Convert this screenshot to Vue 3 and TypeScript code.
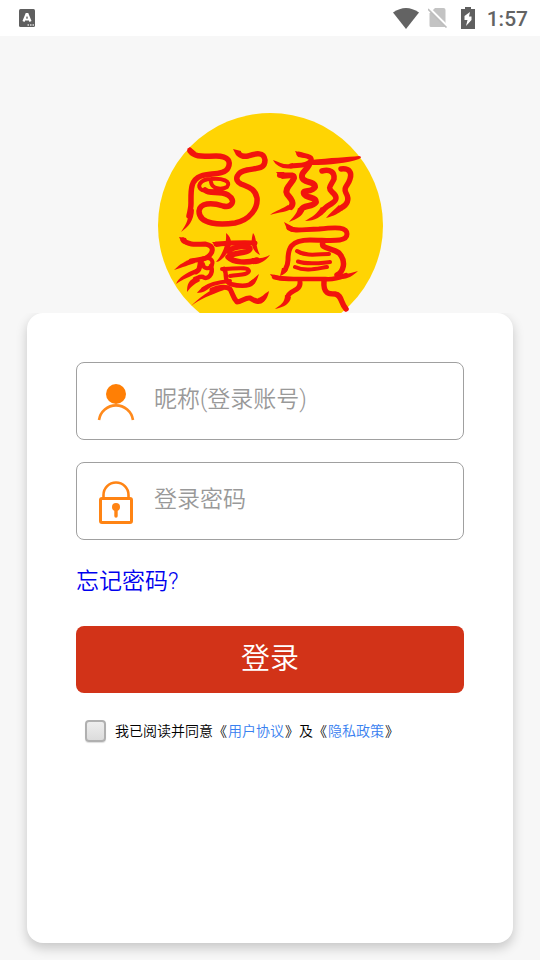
<script setup lang="ts">
import { ref } from 'vue'

const account = ref('')
const password = ref('')
const agreed = ref(false)

// Brush strokes of the seal: path and stroke thickness
const strokes: { d: string; w: number }[] = [
  { d: 'M190 151C195 158 204 156 216 156C229 156 231 162 228 168C225 175 210 173 201 176C190 180 191 191 191 203C191 208 190 212 189 216', w: 5.5 },
  { d: 'M211 182C212 189 221 190 227 187C232 181 222 178 211 179C200 179 196 187 202 190C210 192 220 191 227 187', w: 4 },
  { d: 'M205 190C210 195 219 190 228 195C237 201 231 208 223 206C211 202 200 203 199 211C199 225 221 225 235 223C250 220 258 208 257 198C255 188 248 187 241 184C233 180 237 172 247 170C258 168 265 169 265 160C264 152 256 153 248 156C243 157 241 156 239 154', w: 5.5 },
  { d: 'M299 154C304 156 313 156 311 161C307 166 300 165 291 166', w: 5 },
  { d: 'M280 175C285 177 294 173 294 178C292 184 284 188 287 194C290 198 295 202 291 207', w: 6 },
  { d: 'M309 165C306 171 301 172 302 177C303 184 315 180 315 187C312 193 302 189 304 194C307 199 316 196 316 202C312 208 304 204 301 210', w: 6 },
  { d: 'M322 171C330 169 335 172 334 179C331 186 327 187 332 192C337 196 338 200 331 204C327 206 325 208 323 210', w: 5.5 },
  { d: 'M341 169C350 168 352 173 350 179C348 186 343 187 346 193C350 200 347 205 341 208', w: 5.5 },
  { d: 'M183 240C189 246 198 244 205 244C216 246 213 254 206 258C200 260 195 260 191 261', w: 5 },
  { d: 'M204 259C209 256 214 260 212 265C210 270 203 269 203 264', w: 4 },
  { d: 'M203 259C197 262 203 269 196 272', w: 5 },
  { d: 'M211 266C214 275 207 280 203 277C200 276 198 278 195 279', w: 4.5 },
  { d: 'M216 244C229 243 241 242 255 243', w: 5 },
  { d: 'M228 251C235 246 250 245 250 249C248 254 232 252 228 257C234 263 247 263 257 260', w: 5.5 },
  { d: 'M222 269C234 269 248 266 249 271C247 276 237 274 230 276', w: 4 },
  { d: 'M224 269C228 274 223 280 230 284C238 286 249 287 253 282', w: 4.5 },
  { d: 'M230 281C219 282 208 285 203 289', w: 4 },
  { d: 'M212 290C218 287 226 286 230 289C233 294 233 298 237 302C241 302 246 297 250 298C255 301 259 303 262 300', w: 5 },
  { d: 'M289 228C294 232 305 229 319 229C337 227 347 227 347 234C347 243 329 240 310 240C290 240 288 249 288 260C288 265 286 268 285 270', w: 5 },
  { d: 'M323 242C320 249 331 247 339 253C347 262 343 272 337 275', w: 5.5 },
  { d: 'M297 251C306 257 319 254 329 254M298 261.500C308 265 320 263 330 262M295 267C306 272 319 268 327 267', w: 4 },
  { d: 'M274 277C283 280 301 279 325 279C335 280 341 277 346 275', w: 4.500 },
  { d: 'M300 282C301 291 290 290 288 296', w: 5 },
  { d: 'M324 281C323 294 329 294 335 294C342 295 340 302 346 309', w: 5.500 },
]

// Tapered ends of the same strokes, drawn as filled shapes
const tapers: string[] = [
  'M188 213C189 220 185 226 181 232C188 227 194 221 194 209Z',
  'M195 155L187 149L190 147L196 152Z',
  'M233 149L241 151L241 157L236 155Z',
  'M311 160C330 158 348 157 359 156Q363 157 359 159C347 163 330 165 311 165Z',
  'M293 163C286 166 281 163 273 160C276 166 283 170 293 168Z',
  'M276 172L284 172L287 178L282 179Z',
  'M295 151L303 153L305 158L298 157Z',
  'M288 205C283 209 276 210 270 215C279 212 288 212 293 208Z',
  'M298 208C297 214 292 218 289 222C297 219 302 216 304 211Z',
  'M321 207C317 214 312 217 305 221C315 221 322 216 326 211Z',
  'M339 205C334 210 330 213 326 218C334 216 339 213 343 210Z',
  'M179 237L186 238L188 245L182 243Z',
  'M194 258C185 261 180 264 174 270C183 267 189 265 195 263Z',
  'M196 269C186 273 179 277 176 284C183 279 190 277 199 272Z',
  'M198 277C188 279 187 285 187 292C191 287 194 284 200 281Z',
  'M226 233C232 237 233 246 227 253C224 258 219 262 216 262C222 255 227 245 226 233Z',
  'M212 242L218 242L221 246L216 247Z',
  'M253 233C257 238 255 245 260 255C252 251 250 244 253 233Z',
  'M252 258C261 259 266 257 270 255C265 261 260 265 251 264Z',
  'M259 274C257 280 256 284 250 286L249 282C253 280 255 277 259 274Z',
  'M222 286C210 289 199 298 191 306C200 299 210 295 224 290Z',
  'M208 285C203 286 199 290 197 293C203 293 207 290 211 287Z',
  'M259 302C264 304 268 298 269 291C264 294 261 298 258 298Z',
  'M284 222L295 228L292 232L287 229Z',
  'M282 268L288 268C287 273 283 275 280 276Z',
  'M270 274C277 275 282 277 287 277L285 281C277 281 272 278 270 274Z',
  'M343 274C349 274 353 272 358 271C353 276 347 279 342 279Z',
  'M285 295C285 303 280 305 275 309C284 307 290 304 291 297Z',
]
</script>

<template>
  <div class="page">
    <header class="status">
      <svg class="status-app" viewBox="0 0 16 18" aria-hidden="true">
        <rect width="16" height="18" rx="1.5" fill="#5f5f5f" />
        <path d="M4.500 12.500L7.500 5H8.500L11.500 12.500M5.800 10.500H10.200" fill="none" stroke="#fff" stroke-width="2.200" />
        <path d="M8.500 16h1.500M11 16h1.500M13.500 16h1.500" stroke="#ddd" stroke-width="1.500" />
      </svg>
      <div class="status-right">
        <svg class="wifi" viewBox="0 0 26 21" aria-hidden="true">
          <path d="M0 4.500Q13 -4.500 26 4.500L13 21Z" fill="#636363" />
        </svg>
        <svg class="sim" viewBox="0 0 20 20" aria-hidden="true">
          <path d="M7 0H15.500Q17.500 0 17.500 2V18Q17.500 19 16 19H3Q1.500 19 1.500 17.500V5.500Z" fill="#c3c3c3" />
          <path d="M1 0L19 18" stroke="#fff" stroke-width="2.500" />
          <path d="M0 1L18.500 19.500" stroke="#bdbdbd" stroke-width="1.600" />
        </svg>
        <svg class="battery" viewBox="0 0 14 22" aria-hidden="true">
          <path d="M4 0H10V2H14V22H0V2H4Z" fill="#5f5f5f" />
          <path d="M9 5L3.500 9V13H6.500L5 19L10.500 13V9.500H8Z" fill="#fff" />
        </svg>
        <span class="time">1:57</span>
      </div>
    </header>

    <div class="brand">
      <svg class="seal" viewBox="158 113 225 225" role="img">
        <circle cx="270.5" cy="225.500" r="112.500" fill="#ffd403" />
        <g fill="none" stroke="#f2130d" stroke-linecap="round" stroke-linejoin="round">
          <path v-for="(s, i) in strokes" :key="i" :d="s.d" :stroke-width="s.w" />
        </g>
        <path v-for="(t, i) in tapers" :key="i" :d="t" fill="#f2130d" />
      </svg>
    </div>

    <form class="card" @submit.prevent>
      <label class="field">
        <svg class="field-icon" viewBox="0 0 40 44" fill="none" aria-hidden="true">
          <circle cx="20" cy="14" r="10" fill="#ff7f05" />
          <path d="M3 40A17.200 17.200 0 0 1 37 40" stroke="#ff8a1c" stroke-width="2.600" />
        </svg>
        <input v-model="account" type="text" placeholder="昵称(登录账号)" />
      </label>
      <label class="field">
        <svg class="field-icon" viewBox="0 0 40 44" fill="none" stroke="#ff8414" aria-hidden="true">
          <path d="M7.500 18V15A12.500 12.500 0 0 1 32.500 15V18" stroke-width="2.600" />
          <rect x="4.500" y="18.500" width="31" height="24" rx="1.500" stroke-width="3" />
          <circle cx="20" cy="27" r="4" fill="#ff8414" stroke="none" />
          <path d="M20 28V36" stroke-width="3.400" stroke-linecap="round" />
        </svg>
        <input v-model="password" type="password" placeholder="登录密码" />
      </label>
      <a class="forgot" href="#">忘记密码?</a>
      <button class="submit" type="submit">登录</button>
      <div class="terms">
        <input id="agree" v-model="agreed" type="checkbox" />
        <div>
          <label for="agree">我已阅读并同意</label>《<a href="#">用户协议</a>》及《<a href="#">隐私政策</a>》
        </div>
      </div>
    </form>
  </div>
</template>

<style>
body {
  margin: 0;
}
</style>

<style scoped>
.page {
  box-sizing: border-box;
  display: flex;
  flex-direction: column;
  min-height: 100vh;
  padding-bottom: 17px;
  background: #f7f7f7;
  font-family: Roboto, "Noto Sans CJK SC", sans-serif;
  font-weight: 350;
}
.status {
  display: flex;
  align-items: center;
  justify-content: space-between;
  box-sizing: border-box;
  height: 36px;
  padding: 0 12px 0 19px;
  background: #fff;
}
.status-app {
  width: 16px;
  height: 18px;
}
.status-right {
  display: flex;
  align-items: center;
  height: 34px;
}
.wifi {
  width: 26px;
  height: 21px;
  margin-right: 9px;
}
.sim {
  width: 20px;
  height: 20px;
  margin-right: 13px;
}
.battery {
  width: 14px;
  height: 22px;
  margin-right: 12px;
}
.time {
  color: #636363;
  font-size: 21px;
  font-weight: 500;
  line-height: 32px;
  padding-top: 2px;
}
.brand {
  height: 200px;
  margin-top: 77px;
  overflow: hidden;
  text-align: center;
}
.seal {
  width: 225px;
  height: 225px;
}
.card {
  box-sizing: border-box;
  display: flex;
  flex: 1;
  flex-direction: column;
  margin: 0 5%;
  padding: 49px;
  border-radius: 16px;
  background: #fff;
  box-shadow: 0 5px 12px rgba(0, 0, 0, 0.2);
  clip-path: inset(0 -30px -30px);
}
.field {
  box-sizing: border-box;
  display: flex;
  align-items: center;
  height: 78px;
  margin-bottom: 22px;
  padding: 2px 19px 0;
  border: 1px solid #a0a0a0;
  border-radius: 8px;
}
.field-icon {
  flex: none;
  width: 40px;
  height: 44px;
  margin-right: 18px;
}
.field input {
  flex: 1;
  min-width: 0;
  padding: 0 0 4px;
  border: 0;
  outline: 0;
  background: transparent;
  color: #333;
  font: inherit;
  font-size: 23px;
  line-height: 36px;
}
.field input::placeholder {
  color: #999;
  opacity: 1;
}
.forgot {
  align-self: flex-start;
  padding-top: 2px;
  color: #00e;
  font-size: 23px;
  line-height: 36px;
  text-decoration: none;
}
.submit {
  height: 67px;
  margin-top: 26px;
  padding: 0 0 8px;
  border: 0;
  border-radius: 8px;
  background: #d23318;
  color: #fff;
  font: inherit;
  font-size: 29px;
}
.terms {
  display: flex;
  align-items: center;
  gap: 9px;
  margin-top: 27px;
  padding-left: 9px;
  color: #000;
  font-size: 14px;
  line-height: 22px;
}
.terms input {
  appearance: none;
  flex: none;
  width: 21px;
  height: 22px;
  margin: 0;
  border: 2px solid #b0b0b0;
  border-radius: 4px;
  background: linear-gradient(#eee, #dcdcdc);
  box-shadow: 0 1px 1px #ddd;
}
.terms input:checked {
  background: #3b7df0;
}
.terms a {
  padding: 0 1px;
  color: #3880f0;
  text-decoration: none;
}
</style>
